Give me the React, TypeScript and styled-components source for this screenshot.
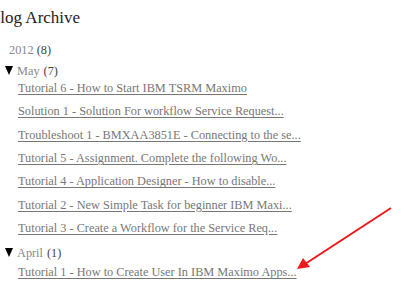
import styled, { createGlobalStyle } from "styled-components";

const posts = {
    may: [
        "Tutorial 6 - How to Start IBM TSRM Maximo",
        "Solution 1 - Solution For workflow Service Request...",
        "Troubleshoot 1 - BMXAA3851E - Connecting to the se...",
        "Tutorial 5 - Assignment. Complete the following Wo...",
        "Tutorial 4 - Application Designer - How to disable...",
        "Tutorial 2 - New Simple Task for beginner IBM Maxi...",
        "Tutorial 3 - Create a Workflow for the Service Req...",
    ],
    april: ["Tutorial 1 - How to Create User In IBM Maximo Apps..."],
};

const GlobalStyle = createGlobalStyle`
    html, body {
        margin: 0;
        padding: 0;
        background: #fff;
        overflow: hidden;
    }
`;

export default function App() {
    return (
        <>
            <GlobalStyle />
            <Widget>
                <Title>Blog Archive</Title>

                <Year>
                    2012 <Count>(8)</Count>
                </Year>

                <Month>
                    <Toggle />
                    <MonthName>May</MonthName> <Count>(7)</Count>
                </Month>
                <Posts>
                    {posts.may.map((p) => (
                        <li key={p}>
                            <PostLink href="#">{p}</PostLink>
                        </li>
                    ))}
                </Posts>

                <Month $gap>
                    <Toggle />
                    <MonthName>April</MonthName> <Count>(1)</Count>
                </Month>
                <Posts $last>
                    {posts.april.map((p) => (
                        <li key={p}>
                            <PostLink href="#">{p}</PostLink>
                        </li>
                    ))}
                </Posts>

                <Arrow width="100" height="70" viewBox="0 0 100 70">
                    <line x1="95" y1="2" x2="9" y2="58" stroke="#f01818" strokeWidth="2" />
                    <polygon points="1,63 7,52 14,61" fill="#f01818" />
                </Arrow>
            </Widget>
        </>
    );
}

const Widget = styled.div`
    position: relative;
    width: 420px;
    height: 281px;
    overflow: hidden;
    font-family: "Liberation Serif", serif;
    color: #888;
`;

const Title = styled.h2`
    margin: 7px 0 0 -11px;
    font-size: 17px;
    font-weight: normal;
    line-height: 22px;
    color: #222;
`;

const Year = styled.div`
    margin-top: 12px;
    padding-left: 9px;
    font-size: 12.3px;
    line-height: 18px;
`;

const Month = styled.div<{ $gap?: boolean }>`
    margin-top: ${({ $gap }) => ($gap ? "4px" : "3px")};
    padding-left: 5px;
    display: flex;
    align-items: center;
    font-size: 12.3px;
    line-height: 18px;
`;

const Toggle = styled.span`
    width: 0;
    height: 0;
    margin: 0 4px 1px 0;
    border-left: 4.5px solid transparent;
    border-right: 4.5px solid transparent;
    border-top: 9px solid #000;
`;

const MonthName = styled.span`
    margin-right: 4px;
`;

const Count = styled.span`
    color: #444;
`;

const Posts = styled.ul<{ $last?: boolean }>`
    list-style: none;
    margin: ${({ $last }) => ($last ? "-1px" : "-3px")} 0 0;
    padding: 0 0 0 18px;

    li {
        font-size: 12.3px;
        line-height: 23.33px;
    }
`;

const PostLink = styled.a`
    color: #777;
    text-decoration: underline;
    text-underline-offset: 2px;
`;

const Arrow = styled.svg`
    position: absolute;
    left: 296px;
    top: 206px;
`;
